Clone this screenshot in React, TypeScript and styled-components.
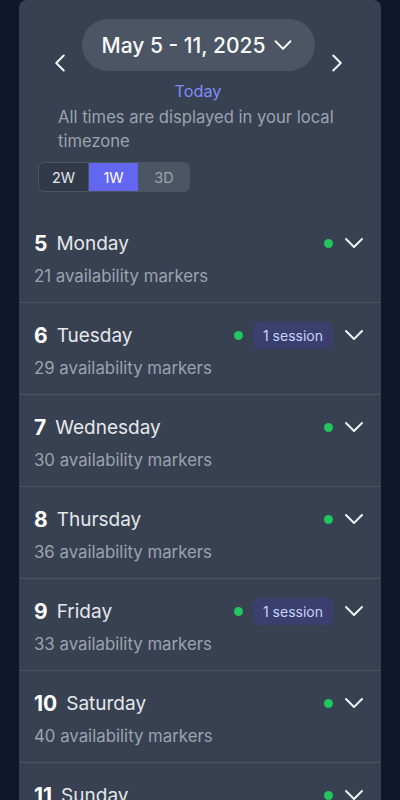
import React from "react";
import styled, { createGlobalStyle } from "styled-components";
import { ChevronDown, ChevronLeft, ChevronRight } from "lucide-react";

const Global = createGlobalStyle`
  html, body { margin: 0; padding: 0; background: #0f172a; }
  body { font-family: Inter, "Noto Sans", sans-serif; -webkit-font-smoothing: antialiased; }
  * { box-sizing: border-box; }
`;

const Page = styled.div`
  width: 400px;
  height: 800px;
  overflow: hidden;
  background: #0f172a;
  padding: 0 19px;
`;

const Panel = styled.div`
  background: #374151;
  border-radius: 8px 8px 0 0;
  min-height: 800px;
`;

const Header = styled.div`
  display: flex;
  flex-direction: column;
  padding: 19px 0 0;
`;

const NavRow = styled.div`
  display: flex;
  align-items: flex-end;
  justify-content: space-between;
  padding: 0 29px 0 26px;
`;

const NavButton = styled.button`
  background: none;
  border: none;
  padding: 0;
  color: #f3f4f6;
  display: flex;
  align-items: center;
  justify-content: center;
  width: 30px;
  height: 30px;
  margin-bottom: -7px;
`;

const RangePill = styled.button`
  display: flex;
  align-items: center;
  gap: 3px;
  height: 52px;
  padding: 0 17px 0 20px;
  border: none;
  border-radius: 26px;
  background: #4b5563;
  color: #f9fafb;
  font-family: inherit;
  font-size: 21px;
  font-weight: 500;
`;

const Today = styled.div`
  text-align: center;
  color: #818cf8;
  font-size: 16.3px;
  line-height: 24px;
  margin-top: 8px;
  padding-right: 4px;
`;

const Note = styled.p`
  margin: 2px 0 0;
  padding: 0 20px 0 39px;
  color: #9ca3af;
  font-size: 16.6px;
  line-height: 24px;
`;

const Segmented = styled.div`
  display: flex;
  align-self: flex-start;
  margin: 9px 0 0 19px;
  height: 30px;
  border-radius: 6px;
  overflow: hidden;
  border: 1px solid #4b5563;
  background: #4b5563;
`;

const Segment = styled.button<{ $active?: boolean; $muted?: boolean }>`
  width: 50px;
  border: none;
  font-family: inherit;
  font-size: 14.5px;
  padding: 0;
  background: ${(p) => (p.$active ? "#6366f1" : p.$muted ? "#4b5563" : "#323a49")};
  color: ${(p) => (p.$active ? "#ffffff" : p.$muted ? "#9ca3af" : "#e5e7eb")};
  border-right: ${(p) => (p.$muted ? "none" : "1px solid #4b5563")};
`;

const List = styled.div`
  margin-top: 19px;
`;

const Row = styled.div`
  padding: 16px 11px 14px 15px;
  border-bottom: 1px solid #4b5563;
`;

const RowTop = styled.div`
  display: flex;
  align-items: center;
  height: 32px;
`;

const DayNum = styled.span`
  color: #ffffff;
  font-size: 21px;
  font-weight: 700;
  margin-right: 9px;
`;

const DayName = styled.span`
  color: #e5e7eb;
  font-size: 19px;
  font-weight: 400;
  flex: 1;
`;

const Indicators = styled.div`
  display: flex;
  align-items: center;
  gap: 10px;
`;

const Dot = styled.span`
  width: 9px;
  height: 9px;
  border-radius: 50%;
  background: #22c55e;
`;

const Badge = styled.span`
  background: #3b3f6e;
  color: #c7d2fe;
  font-size: 14px;
  line-height: 19px;
  padding: 4px 10px;
  border-radius: 6px;
`;

const Expand = styled.span`
  display: flex;
  color: #f3f4f6;
  margin-left: -5px;
`;

const Sub = styled.div`
  margin-top: 5px;
  color: #9ca3af;
  font-size: 16.8px;
  line-height: 24px;
`;

const days = [
  { n: 5, name: "Monday", markers: 21 },
  { n: 6, name: "Tuesday", markers: 29, sessions: 1 },
  { n: 7, name: "Wednesday", markers: 30 },
  { n: 8, name: "Thursday", markers: 36 },
  { n: 9, name: "Friday", markers: 33, sessions: 1 },
  { n: 10, name: "Saturday", markers: 40 },
  { n: 11, name: "Sunday", markers: 28 },
];

export default function App() {
  return (
    <>
      <Global />
      <Page>
        <Panel>
          <Header>
            <NavRow>
              <NavButton aria-label="Previous week">
                <ChevronLeft size={30} strokeWidth={1.6} />
              </NavButton>
              <RangePill>
                May 5 - 11, 2025
                <ChevronDown size={30} strokeWidth={1.5} />
              </RangePill>
              <NavButton aria-label="Next week">
                <ChevronRight size={30} strokeWidth={1.6} />
              </NavButton>
            </NavRow>
            <Today>Today</Today>
            <Note>All times are displayed in your local timezone</Note>
            <Segmented>
              <Segment>2W</Segment>
              <Segment $active>1W</Segment>
              <Segment $muted>3D</Segment>
            </Segmented>
          </Header>
          <List>
            {days.map((d) => (
              <Row key={d.n}>
                <RowTop>
                  <DayNum>{d.n}</DayNum>
                  <DayName>{d.name}</DayName>
                  <Indicators>
                    <Dot />
                    {d.sessions ? <Badge>{d.sessions} session</Badge> : null}
                    <Expand>
                      <ChevronDown size={32} strokeWidth={1.5} />
                    </Expand>
                  </Indicators>
                </RowTop>
                <Sub>{d.markers} availability markers</Sub>
              </Row>
            ))}
          </List>
        </Panel>
      </Page>
    </>
  );
}
